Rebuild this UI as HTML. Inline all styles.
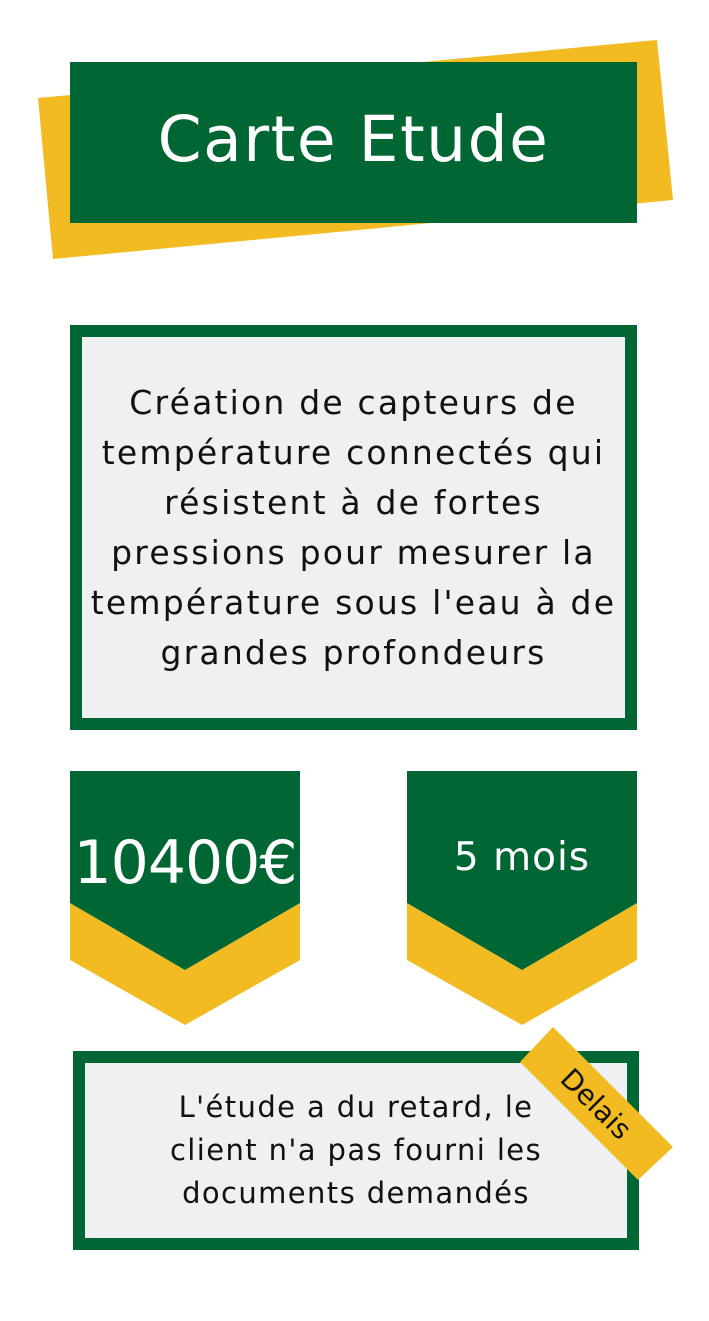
<!DOCTYPE html>
<html><head><meta charset="utf-8"><style>
*{margin:0;padding:0;box-sizing:border-box}
body{width:709px;height:1321px;background:#fff;position:relative;overflow:hidden;font-family:"DejaVu Sans","Liberation Sans",sans-serif}
.abs{position:absolute}
.t{position:absolute;left:0;right:0;text-align:center;white-space:nowrap;color:#111}
</style></head><body>
<svg class="abs" style="left:0;top:0" width="709" height="1321">
<polygon points="38,98 657,40 673,200 53,259" fill="#f3bb22"/>
<rect x="70" y="62" width="567" height="161" fill="#006633"/>
<rect x="70" y="325" width="567" height="405" fill="#006633"/>
<rect x="82" y="337" width="543" height="381" fill="#eff0f2"/>
<polygon points="70,903 185,970 300,903 300,960 185,1025 70,960" fill="#f3bb22"/>
<polygon points="70,771 300,771 300,903 185,970 70,903" fill="#006633"/>
<polygon points="407,903 522,970 637,903 637,960 522,1025 407,960" fill="#f3bb22"/>
<polygon points="407,771 637,771 637,903 522,970 407,903" fill="#006633"/>
<rect x="73" y="1051" width="566" height="199" fill="#006633"/>
<rect x="85" y="1063" width="542" height="175" fill="#eff0f2"/>
<polygon points="553,1027 673,1147 638,1180 520,1062" fill="#f3bb22"/>
<text x="597" y="1114" transform="rotate(45 597 1103)" text-anchor="middle" font-family="DejaVu Sans,sans-serif" font-size="28" fill="#111">Delais</text>
</svg>
<div class="t" style="left:70px;width:567px;top:100px;font-size:63px;letter-spacing:1.5px;color:#fff;line-height:80px">Carte Etude</div>
<div class="t" style="left:70px;width:567px;top:378px;font-size:33px;letter-spacing:2.2px;line-height:50px">Création de capteurs de<br>température connectés qui<br>résistent à de fortes<br>pressions pour mesurer la<br>température sous l'eau à de<br>grandes profondeurs</div>
<div class="t" style="left:62px;width:246px;top:828px;font-size:60px;color:#fff;line-height:70px;letter-spacing:-1px">10400€</div>
<div class="t" style="left:407px;width:230px;top:835px;font-size:39px;letter-spacing:1px;color:#fff;line-height:46px">5 mois</div>
<div class="t" style="left:73px;width:566px;top:1086px;font-size:29px;letter-spacing:1.4px;line-height:43px">L'étude a du retard, le<br>client n'a pas fourni les<br>documents demandés</div>
</body></html>
